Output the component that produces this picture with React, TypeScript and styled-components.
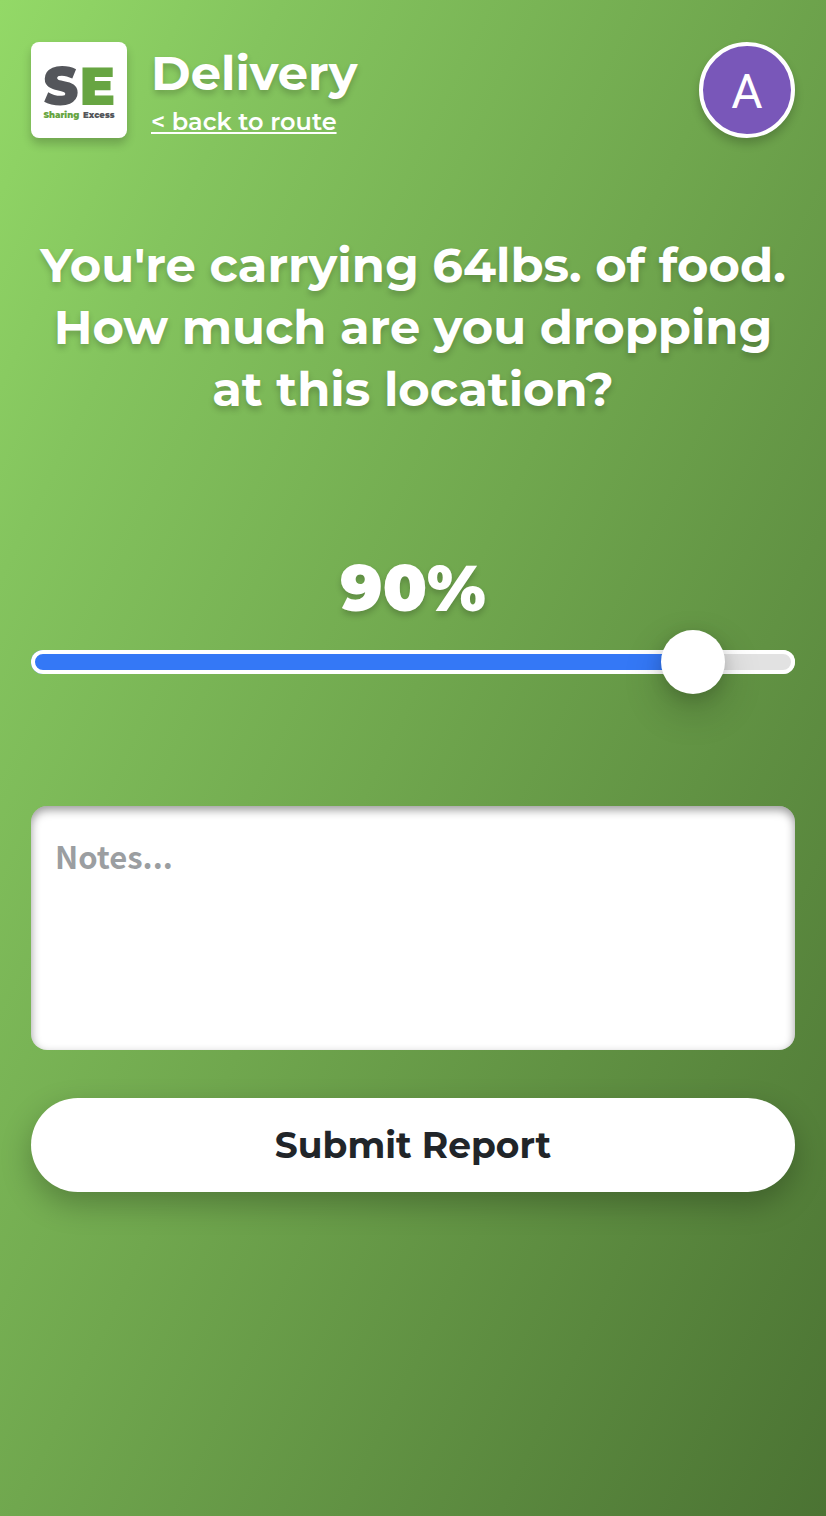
import { useState } from "react";
import styled, { createGlobalStyle } from "styled-components";

const GlobalStyle = createGlobalStyle`
  *, *::before, *::after { box-sizing: border-box; }
  body {
    margin: 0;
    font-family: Montserrat, Inter, sans-serif;
    color: #fff;
  }
`;

const Page = styled.div`
  min-height: 100vh;
  padding: 42px 31px;
  display: flex;
  flex-direction: column;
  background: linear-gradient(116deg, #93d967, #84c45e 18%, #70a74e 48%, #4b7333);
`;

const Header = styled.header`
  display: flex;
  align-items: center;
  height: 96px;
`;

const Logo = styled.svg`
  flex: none;
  width: 96px;
  height: 96px;
  border-radius: 8px;
  background: #fff;
  box-shadow: 0 6px 10px rgba(0, 0, 0, 0.2);
  font-family: Montserrat, Inter, sans-serif;
  font-weight: 900;
`;

const Heading = styled.div`
  flex: 1;
  display: flex;
  flex-direction: column;
  align-items: flex-start;
  gap: 2px;
  margin-left: 24px;
`;

const Title = styled.h1`
  margin: 0;
  font-size: 48px;
  font-weight: 700;
  line-height: 62px;
  text-shadow: 0 4px 6px rgba(0, 0, 0, 0.2);
`;

const BackLink = styled.a`
  color: #fff;
  font-size: 24px;
  font-weight: 600;
  line-height: 32px;
  text-decoration: underline;
  text-decoration-thickness: 2px;
  text-underline-offset: 2px;
`;

const Avatar = styled.button`
  flex: none;
  width: 96px;
  height: 96px;
  padding: 2px 0 0;
  border: 4px solid #fff;
  border-radius: 50%;
  background: #7957b9;
  color: #fff;
  font-family: Roboto, sans-serif;
  font-size: 48px;
  box-shadow: 0 6px 10px rgba(0, 0, 0, 0.2);
`;

const Form = styled.form`
  display: flex;
  flex-direction: column;
  margin-top: 96px;
`;

const Prompt = styled.h2`
  margin: 0;
  font-size: 48px;
  font-weight: 700;
  line-height: 62px;
  text-align: center;
  text-shadow: 0 4px 6px rgba(0, 0, 0, 0.2);
`;

const Amount = styled.label`
  margin-top: 128px;
  font-size: 64px;
  font-weight: 900;
  line-height: 80px;
  text-align: center;
  text-shadow: 0 4px 6px rgba(0, 0, 0, 0.2);
`;

const Slider = styled.input`
  appearance: none;
  width: 100%;
  height: 64px;
  margin: 2px 0 0;
  background: transparent;

  &::-webkit-slider-runnable-track {
    height: 24px;
    border-radius: 12px;
    background: linear-gradient(to right, #3478f6 var(--filled), #e2e2e2 var(--filled));
    box-shadow: inset 0 0 0 4px #fff;
  }

  &::-webkit-slider-thumb {
    appearance: none;
    width: 64px;
    height: 64px;
    margin-top: -20px;
    border-radius: 50%;
    background: #fff;
    box-shadow: 0 16px 40px rgba(0, 0, 0, 0.2), 0 4px 16px rgba(0, 0, 0, 0.15);
  }
`;

const Notes = styled.textarea`
  width: 100%;
  height: 244px;
  margin-top: 112px;
  padding: 24px;
  border: 0;
  border-radius: 16px;
  background: #fff;
  box-shadow: inset 0 4px 10px rgba(0, 0, 0, 0.4);
  color: #212529;
  font-family: "Source Sans Pro", "Noto Sans CJK SC", sans-serif;
  font-size: 31px;
  font-weight: 700;
  line-height: 52px;
  resize: none;

  &::placeholder {
    color: #9b9ea1;
    opacity: 1;
  }
`;

const SubmitButton = styled.button`
  width: 100%;
  height: 94px;
  margin-top: 48px;
  border: 0;
  border-radius: 48px;
  background: #fff;
  color: #212529;
  font-family: inherit;
  font-size: 36px;
  font-weight: 700;
  box-shadow: 0 12px 30px rgba(0, 0, 0, 0.25);
`;

export default function App() {
  const [percent, setPercent] = useState(90);

  return (
    <>
      <GlobalStyle />
      <Page>
        <Header>
          <Logo viewBox="0 0 192 192" role="img" aria-label="Sharing Excess">
            <text x="25" y="126" fontSize="106" fill="#54565b">S</text>
            <text x="97" y="126" fontSize="106" fill="#67a542">E</text>
            <text x="25" y="152" fontSize="17" fill="#67a542">Sharing</text>
            <text x="167" y="152" fontSize="17" fill="#54565b" textAnchor="end">Excess</text>
          </Logo>
          <Heading>
            <Title>Delivery</Title>
            <BackLink href="#route">&lt; back to route</BackLink>
          </Heading>
          <Avatar type="button" aria-label="Account">A</Avatar>
        </Header>
        <Form onSubmit={(event) => event.preventDefault()}>
          <Prompt>
            You're carrying 64lbs. of food. How much are you dropping at this location?
          </Prompt>
          <Amount htmlFor="amount">{percent}%</Amount>
          <Slider
            id="amount"
            type="range"
            min={0}
            max={100}
            value={percent}
            onChange={(event) => setPercent(Number(event.target.value))}
            style={{ "--filled": `${percent}%` } as React.CSSProperties}
          />
          <Notes aria-label="Notes" placeholder="Notes..." />
          <SubmitButton type="submit">Submit Report</SubmitButton>
        </Form>
      </Page>
    </>
  );
}
